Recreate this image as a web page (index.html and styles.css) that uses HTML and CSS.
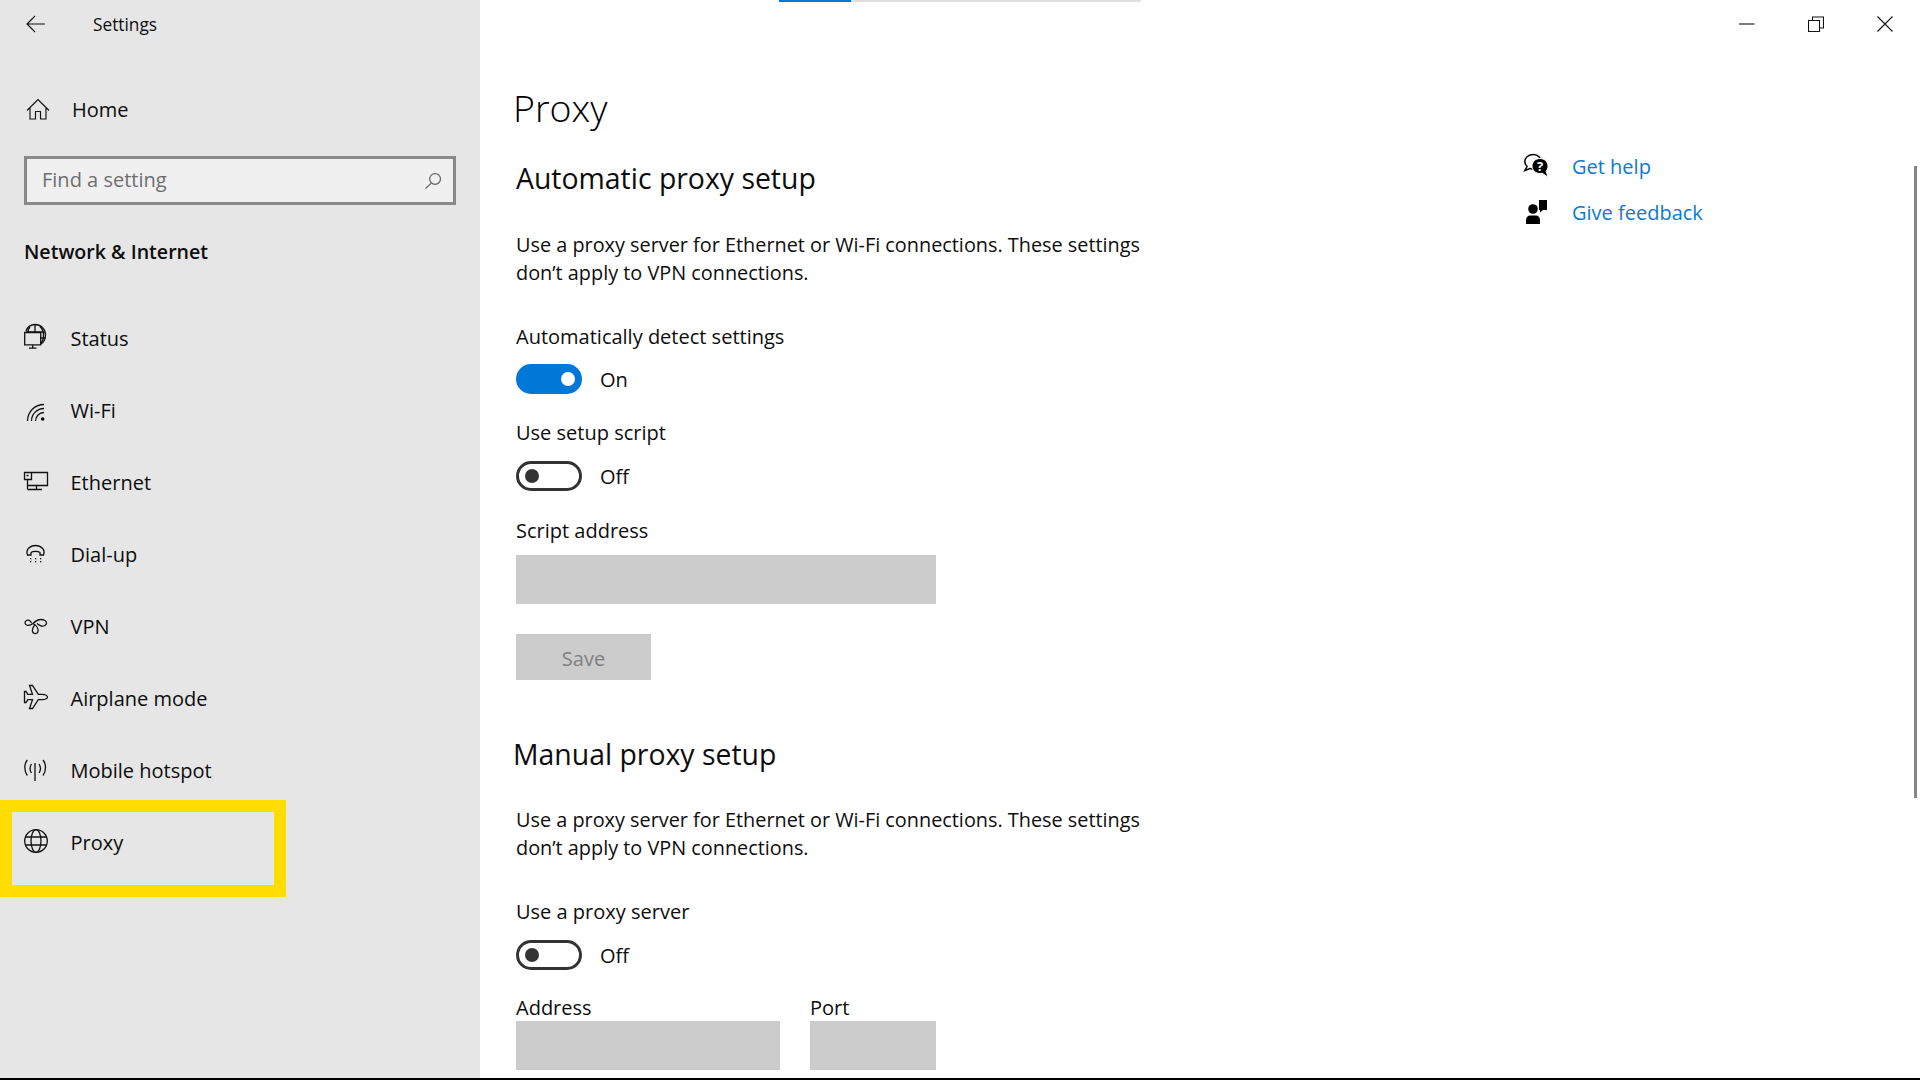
FILE: index.html
```html
<!DOCTYPE html>
<html lang="en">
<head>
<meta charset="utf-8">
<title>Settings - Proxy</title>
<link rel="stylesheet" href="styles.css">
</head>
<body>
<div class="window">
  <aside class="sidebar">
    <div class="app-title">
      <svg class="icon back" viewBox="0 0 24 24"><path d="M21 12H3.500M11 4l-8 8 8 8"/></svg>
      <span>Settings</span>
    </div>
    <div class="home">
      <svg class="icon thin" viewBox="0 0 24 24"><path d="M1 12.500L12 1.500 23 12.500M4 9.500v11.500h5.500v-7.500h5V21H20V9.500"/></svg>
      <span>Home</span>
    </div>
    <div class="search">
      <span>Find a setting</span>
      <svg class="icon search-icon" viewBox="0 0 24 24"><circle cx="14.500" cy="9.500" r="6.500"/><path d="M10 14.500l-7 6.500"/></svg>
    </div>
    <h2 class="group">Network &amp; Internet</h2>
    <nav class="nav">
      <div class="nav-item">
        <svg class="icon" viewBox="0 0 24 24"><path d="M2 4C3.500 0 7-2.500 11-2.500c5.800 0 10.500 4.700 10.500 10.500 0 4-2 7.500-5 9.200"/><path d="M11-2.500V5M6 0C4.500 1.500 4 3.500 3.800 5M16-.5c2.500 2.500 3.500 5.500 3.500 9 0 3-1 6-3 8M2 5h18.500M16.500 11h5"/><path class="plain" d="M.7 5.500h16v12.300H.7zM8.700 17.800v3.200M5 21.200h7.500"/></svg>
        <span>Status</span>
      </div>
      <div class="nav-item">
        <svg class="icon" viewBox="0 0 24 24"><path d="M3.500 22A16.500 16.500 0 0 1 20 5.500M7.500 22A12.500 12.500 0 0 1 20 9.500M11.500 22A8.500 8.500 0 0 1 20 13.500"/><circle class="solid" cx="18.700" cy="20" r="1.800"/></svg>
        <span>Wi-Fi</span>
      </div>
      <div class="nav-item">
        <svg class="icon" viewBox="0 0 24 24"><path d="M7.500 1.500h16v13H4M.5 1.500h7v7h-7zM3.500 8.500v10M3.500 18.500H18M12.500 14.500v4M2.500 4.500h2"/></svg>
        <span>Ethernet</span>
      </div>
      <div class="nav-item">
        <svg class="icon" viewBox="0 0 24 24"><path d="M3.500 12C1 5 8 2.500 11.500 2.500S22 5 19.500 12H16V9.500c-2-1.500-7-1.500-9 0V12z"/><g class="dots"><rect x="6" y="15" width="1.300" height="1.300"/><rect x="11" y="15" width="1.300" height="1.300"/><rect x="16" y="15" width="1.300" height="1.300"/><rect x="6" y="18" width="1.300" height="1.300"/><rect x="11" y="18" width="1.300" height="1.300"/><rect x="16" y="18" width="1.300" height="1.300"/></g></svg>
        <span>Dial-up</span>
      </div>
      <div class="nav-item">
        <svg class="icon" viewBox="0 0 24 24"><path d="M7.500 8C6.500 5.500 4 4.500 2.500 5.500.5 6.700.5 9 2.500 10c2 1 4.500 0 6.500-1.500 2-2 4.500-4 8-4 3 0 5.500 1.500 5.500 3.500s-2.500 3.500-5 3c-2-.5-3-1.500-4.500-2.500"/><path d="M9 8.500c3.500 2 6 5.500 4.800 8.500-1 2.500-4.800 2-5.300-.5-.5-2.500 1-5 2-6.500"/></svg>
        <span>VPN</span>
      </div>
      <div class="nav-item">
        <svg class="icon" viewBox="0 0 24 24"><path d="M23.500 10c0-1.700-3-2.700-5-2.700h-4.200L8.500-1.500H5.500l3 8.800H3.800L2 4.500H.5v11H2l1.800-2.800h4.700l-3 8.800h3l5.800-8.800h4.200c2 0 5-1 5-2.700z"/></svg>
        <span>Airplane mode</span>
      </div>
      <div class="nav-item">
        <svg class="icon" viewBox="0 0 24 24"><path d="M11 4v18M7.500 5c-2 3-2 6 0 9M15 5c2 3 2 6 0 9M3.300 1C0 5 0 12 3.300 16.500M19 1c3.300 4 3.300 11 0 15.500"/></svg>
        <span>Mobile hotspot</span>
      </div>
      <div class="nav-item highlighted">
        <svg class="icon" viewBox="0 0 24 24"><circle cx="12" cy="10" r="11.300"/><ellipse cx="12" cy="10" rx="5" ry="11.300"/><path d="M1.500 6h21M1.500 14h21"/></svg>
        <span>Proxy</span>
      </div>
    </nav>
  </aside>

  <main class="main">
    <div class="progress"><span class="progress-value"></span></div>
    <div class="scroll-thumb"></div>
    <header class="caption">
      <div class="caption-btn"><svg class="glyph" viewBox="0 0 16 16"><path d="M0 8h15.500"/></svg></div>
      <div class="caption-btn"><svg class="glyph" viewBox="0 0 16 16"><path d="M.5 4.500h11v11H.5zM4.500 4.500V1h11v11h-4"/></svg></div>
      <div class="caption-btn"><svg class="glyph" viewBox="0 0 16 16"><path d="M.5.5l15 15M15.500.5l-15 15"/></svg></div>
    </header>
    <div class="content">
      <section class="form">
        <h1 class="page-title">Proxy</h1>
        <h2 class="heading first">Automatic proxy setup</h2>
        <p class="desc">Use a proxy server for Ethernet or Wi-Fi connections. These settings don’t apply to VPN connections.</p>
        <div class="label auto">Automatically detect settings</div>
        <div class="switch-row gap-a"><span class="switch on"></span><span class="switch-text">On</span></div>
        <div class="label script">Use setup script</div>
        <div class="switch-row gap-b"><span class="switch"></span><span class="switch-text">Off</span></div>
        <div class="label addr">Script address</div>
        <div class="field wide"></div>
        <div class="save">Save</div>
        <h2 class="heading second">Manual proxy setup</h2>
        <p class="desc">Use a proxy server for Ethernet or Wi-Fi connections. These settings don’t apply to VPN connections.</p>
        <div class="label use">Use a proxy server</div>
        <div class="switch-row gap-c"><span class="switch"></span><span class="switch-text">Off</span></div>
        <div class="addr-row">
          <div class="addr-col"><div class="label tight">Address</div><div class="field address"></div></div>
          <div class="addr-col"><div class="label tight">Port</div><div class="field port"></div></div>
        </div>
      </section>
      <aside class="links">
        <div class="link-row">
          <svg class="icon help" viewBox="0 0 24 24"><path class="outline" d="M9.500-.5C4.500-.5.800 2.500.800 6.500c0 2 1 3.800 2.300 5L.8 15.500l5-2c1.200.4 2.400.6 3.700.6 4.500 0 8-3.200 8-7S14-.5 9.500-.5z"/><path class="solid halo" d="M16 3.500c-4.500 0-8 3.400-8 7.500s3.500 7.500 8 7.500c.8 0 1.500-.1 2.200-.3l5.800 4-1.800-6c1.200-1.300 1.800-3.200 1.800-5.200 0-4.100-3.500-7.500-8-7.500z"/><text class="help-mark" x="16" y="15.500">?</text></svg>
          <span>Get help</span>
        </div>
        <div class="link-row">
          <svg class="icon feedback" viewBox="0 0 24 24"><circle class="solid" cx="9" cy="8" r="4.800"/><path class="solid" d="M2 23v-4c0-3 2-4.500 4-4.500h6c2 0 4 1.500 4 4.500v4z"/><path class="solid" d="M15-1h8v10h-4l-3 2.500V9h-1z"/></svg>
          <span>Give feedback</span>
        </div>
      </aside>
    </div>
  </main>
</div>
</body>
</html>
```

FILE: styles.css
```css
*, *::before, *::after { box-sizing: border-box; }
html, body { margin: 0; height: 100%; overflow: hidden; }
body {
  background: #fff;
  color: #0d0d0d;
  font-family: "Open Sans", "Noto Sans", "Liberation Sans", sans-serif;
  font-size: 20px;
  line-height: 28px;
}
.window {
  display: flex;
  height: 1080px;
  border-bottom: 2px solid #000;
  overflow: hidden;
}
.icon {
  width: 24px;
  height: 24px;
  flex: none;
  overflow: visible;
  fill: none;
  stroke: #111;
  stroke-width: 1.3;
}
.icon.back, .icon.thin { stroke-width: 1.15; }
.icon .solid { fill: #000; stroke: none; }
.icon .plain { fill: #e6e6e6; }
.icon .dots rect { fill: #111; stroke: none; }

/* sidebar */
.sidebar {
  width: 480px;
  flex: none;
  background: #e6e6e6;
  display: flex;
  flex-direction: column;
}
.app-title {
  height: 48px;
  display: flex;
  align-items: center;
  padding-left: 24px;
  gap: 44px;
  font-size: 17.3px;
}
.app-title span { margin-left: 1px; margin-top: 1px; }
.home {
  margin-top: 38px;
  height: 48px;
  display: flex;
  align-items: center;
  gap: 22px;
  padding-left: 26px;
}
.home span { margin-bottom: 1px; }
.search {
  margin: 22px 24px 0;
  height: 49px;
  border: 3px solid #8a8a8a;
  background: #f0f0f0;
  color: #6e6e6e;
  display: flex;
  align-items: center;
  justify-content: space-between;
  padding: 0 10px 2px 15px;
}
.search-icon { width: 20px; height: 20px; stroke: #666; stroke-width: 1.5; margin-top: 2px; }
.group {
  margin: 32px 0 0 24px;
  font-size: 19.600px;
  font-weight: 600;
  line-height: 30px;
}
.nav { margin-top: 36px; }
.nav-item {
  position: relative;
  height: 72px;
  display: flex;
  align-items: center;
  gap: 22.500px;
  padding-left: 24px;
}
.nav-item span { margin-bottom: 1px; }
.nav-item.highlighted::after {
  content: "";
  position: absolute;
  left: 0;
  top: -7px;
  width: 286px;
  height: 97px;
  border: 12px solid #ffdd00;
}

/* main */
.main {
  position: relative;
  flex: 1;
  min-width: 0;
}
.progress {
  position: absolute;
  left: 299px;
  top: 0;
  width: 362px;
  height: 2px;
  background: #e0e0e0;
}
.progress-value {
  display: block;
  width: 72px;
  height: 2px;
  background: #0078d7;
}
.scroll-thumb {
  position: absolute;
  left: 1434px;
  top: 166px;
  width: 3px;
  height: 632px;
  background: #858585;
}
.caption {
  height: 48px;
  display: flex;
  justify-content: flex-end;
  padding-right: 1px;
}
.caption-btn {
  width: 69px;
  display: flex;
  align-items: center;
  justify-content: center;
}
.glyph {
  width: 16px;
  height: 16px;
  fill: none;
  stroke: #111;
  stroke-width: 1.1;
}
.content {
  display: grid;
  grid-template-columns: 1008px 1fr;
  padding-left: 36px;
}
.form { width: 640px; }
.page-title {
  margin: 36px 0 0 -3px;
  font-size: 37.500px;
  font-weight: 300;
  line-height: 48px;
  color: #000;
}
.heading {
  margin: 0;
  font-size: 28.400px;
  font-weight: 400;
  line-height: 40px;
}
.heading.first { margin-top: 26px; }
.heading.second { margin: 54px 0 0 -3px; }
.desc { margin: 32px 0 0; font-size: 19.850px; }
.heading.first + .desc { margin-top: 33px; }
.label.auto { margin-top: 36px; }
.label.script { margin-top: 25px; }
.label.addr { margin-top: 26px; }
.label.use { margin-top: 36px; }
.label.tight { line-height: 26px; }
.switch-row {
  display: flex;
  align-items: center;
  gap: 18px;
  height: 30px;
}
.switch-text { margin-top: 2px; }
.gap-a { margin-top: 13px; }
.gap-b { margin-top: 14px; }
.gap-c { margin-top: 14px; }
.switch {
  position: relative;
  width: 66px;
  height: 30px;
  border: 3px solid #333;
  border-radius: 15px;
}
.switch::after {
  content: "";
  position: absolute;
  left: 6px;
  top: 5px;
  width: 14px;
  height: 14px;
  border-radius: 50%;
  background: #333;
}
.switch.on { background: #0078d7; border-color: #0078d7; }
.switch.on::after { left: auto; right: 4px; background: #fff; }
.field { height: 49px; background: #ccc; }
.field.wide { width: 420px; margin-top: 10px; }
.save {
  margin-top: 30px;
  width: 135px;
  height: 46px;
  padding-top: 3px;
  background: #ccc;
  color: #808080;
  display: flex;
  align-items: center;
  justify-content: center;
}
.addr-row {
  display: flex;
  gap: 30px;
  margin-top: 25px;
}
.field.address { width: 264px; }
.field.port { width: 126px; }

/* related links */
.links { padding-top: 105px; }
.link-row {
  display: flex;
  align-items: center;
  gap: 24px;
  height: 28px;
  color: #0a7ad6;
  margin-bottom: 18px;
}
.icon .outline { fill: #fff; stroke: #000; stroke-width: 1.5; }
.icon .solid.halo { stroke: #fff; stroke-width: 1; }
.help-mark {
  fill: #fff;
  stroke: none;
  font-size: 13px;
  font-weight: 700;
  text-anchor: middle;
}
```
